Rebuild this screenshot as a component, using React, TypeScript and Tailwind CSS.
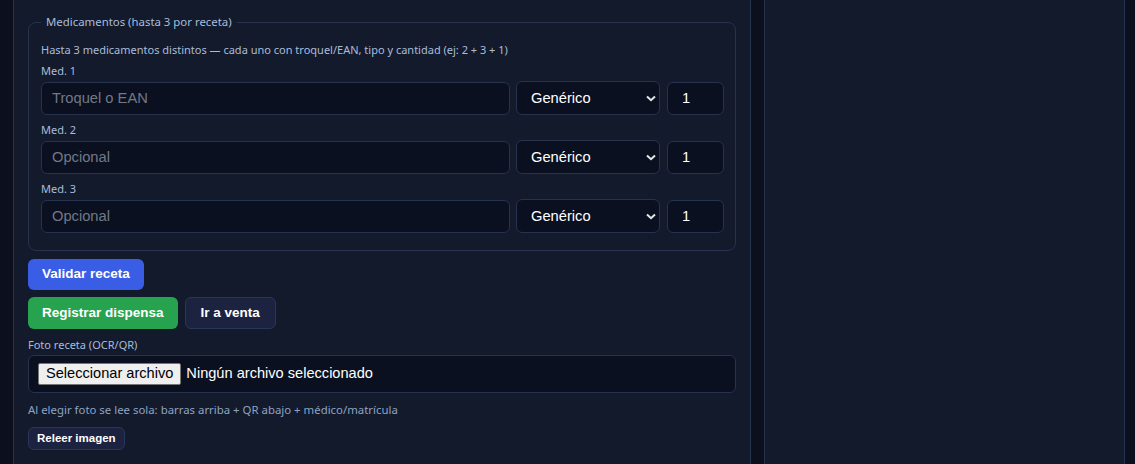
const labelFont = { fontFamily: '"Noto Sans", "Open Sans", sans-serif' };

function MedRow({ label, placeholder }: { label: string; placeholder: string }) {
  return (
    <div>
      <div className="text-[11px] leading-[14px] text-[#a9bddb] mb-[3px]" style={labelFont}>
        {label}
      </div>
      <div className="flex items-center">
        <input
          className="flex-1 h-[33px] rounded-[6px] border border-[#27324f] bg-[#0b1020] px-[10px] text-[14.7px] text-white placeholder:text-[#717887] outline-none font-['Liberation_Sans',Arial,sans-serif]"
          placeholder={placeholder}
        />
        <div className="relative ml-[6px] w-[144px]">
          <select
            defaultValue="gen"
            className="appearance-none w-full h-[34px] rounded-[6px] border border-[#27324f] bg-[#0b1020] pl-[14px] text-[14.7px] text-white outline-none font-['Liberation_Sans',Arial,sans-serif]"
          >
            <option value="gen">Genérico</option>
            <option value="com">Comercial</option>
          </select>
          <svg
            className="pointer-events-none absolute right-[4px] top-[14px]"
            width="10"
            height="7"
            viewBox="0 0 10 7"
          >
            <path d="M1 1.5 L5 5.2 L9 1.5" fill="none" stroke="#e5e7eb" strokeWidth="2" />
          </svg>
        </div>
        <input
          defaultValue="1"
          className="ml-[7px] w-[57px] h-[33px] rounded-[6px] border border-[#27324f] bg-[#0b1020] px-[14px] text-[14.7px] text-white outline-none font-['Liberation_Sans',Arial,sans-serif]"
        />
      </div>
    </div>
  );
}

export default function App() {
  return (
    <div className="h-[464px] overflow-hidden bg-[#0b0f1e] flex pl-[13px] gap-[13px]">
      <div className="w-[738px] h-full border-x border-[#27324f] bg-[#131a2c] px-[14px] pt-[14px]">
        <fieldset className="rounded-[8px] border border-[#27324f] pl-[12px] pr-[11px] pb-[17px]">
          <legend
            className="px-[5px] text-[11.4px] leading-[16px] text-[#a9bddb]"
            style={labelFont}
          >
            Medicamentos (hasta 3 por receta)
          </legend>
          <div className="text-[11px] leading-[14px] text-[#a9bddb] mt-[13px] mb-[7px]" style={labelFont}>
            Hasta 3 medicamentos distintos — cada uno con troquel/EAN, tipo y cantidad (ej: 2 + 3 + 1)
          </div>
          <div className="flex flex-col gap-[8px]">
            <MedRow label="Med. 1" placeholder="Troquel o EAN" />
            <MedRow label="Med. 2" placeholder="Opcional" />
            <MedRow label="Med. 3" placeholder="Opcional" />
          </div>
        </fieldset>

        <div className="mt-[8px] flex flex-col items-start gap-[7px] font-['Liberation_Sans',Arial,sans-serif]">
          <button className="h-[31px] px-[14px] rounded-[6px] bg-[#3a5de6] text-white text-[13.5px] font-bold">
            Validar receta
          </button>
          <div className="flex gap-[7px]">
            <button className="h-[32px] px-[14px] rounded-[6px] bg-[#27a350] text-white text-[13.5px] font-bold">
              Registrar dispensa
            </button>
            <button className="h-[32px] px-[15px] rounded-[6px] border border-[#2a3658] bg-[#1b2340] text-white text-[13.5px] font-bold">
              Ir a venta
            </button>
          </div>
        </div>

        <div className="mt-[9px] text-[11px] leading-[14px] text-[#a9bddb]" style={labelFont}>
          Foto receta (OCR/QR)
        </div>
        <div className="mt-[3px] h-[38px] rounded-[6px] border border-[#27324f] bg-[#0b1020] flex items-center pl-[9px] font-['Liberation_Sans',Arial,sans-serif]">
          <span className="h-[22px] px-[7px] flex items-center bg-[#efefef] border border-[#767676] rounded-[2px] text-[14.6px] text-black">
            Seleccionar archivo
          </span>
          <span className="ml-[5px] text-[14.6px] text-white">Ningún archivo seleccionado</span>
        </div>

        <div className="mt-[9px] text-[11.4px] leading-[16px] text-[#8ea3c2]" style={labelFont}>
          Al elegir foto se lee sola: barras arriba + QR abajo + médico/matrícula
        </div>
        <button className="mt-[9px] h-[23px] px-[8px] rounded-[6px] border border-[#2a3658] bg-[#1b2340] text-white text-[11.5px] font-bold font-['Liberation_Sans',Arial,sans-serif]">
          Releer imagen
        </button>
      </div>

      <div className="w-[361px] h-full border-x border-[#27324f] bg-[#131a2c]" />
    </div>
  );
}
